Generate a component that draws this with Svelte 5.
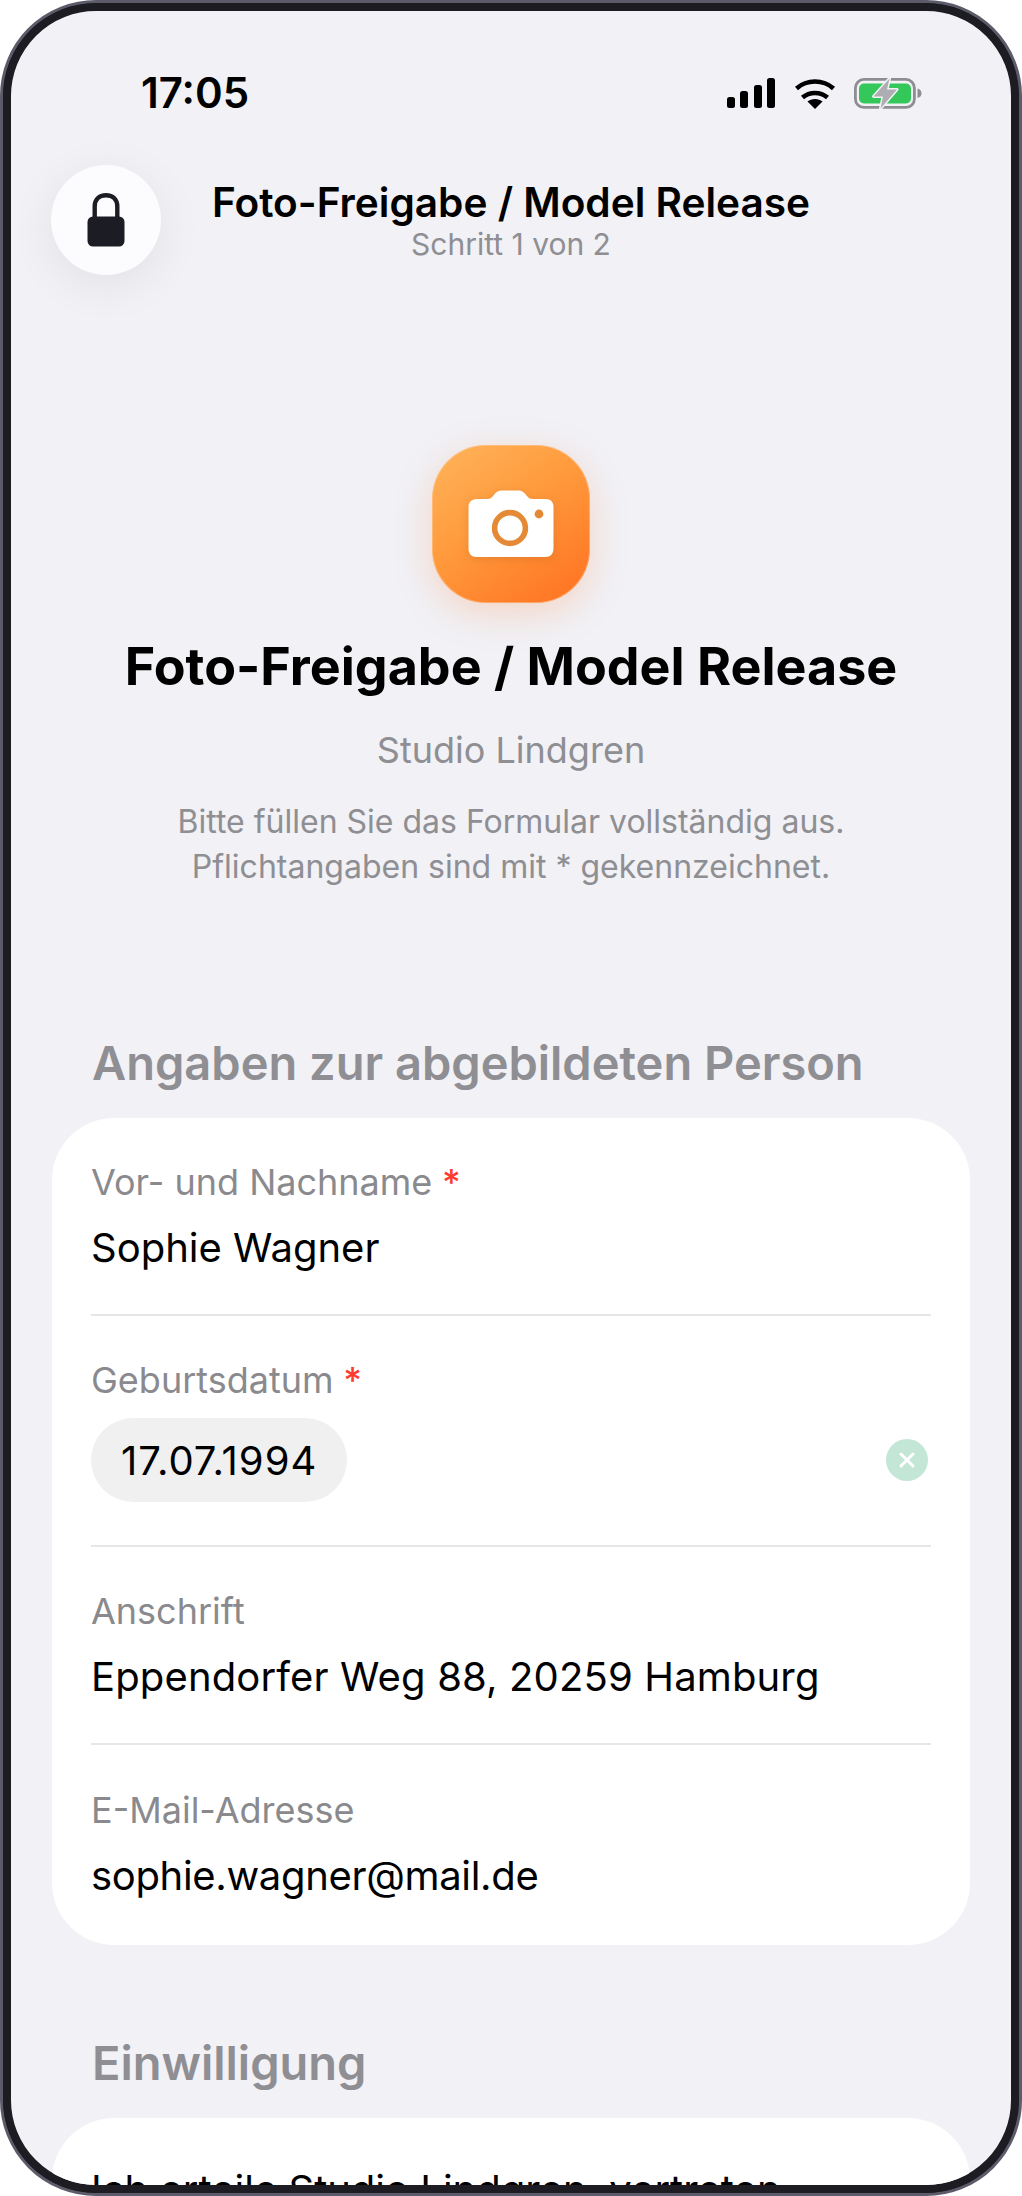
<script>
  const rows = [
    { label: 'Vor- und Nachname', value: 'Sophie Wagner', req: true },
    { label: 'Geburtsdatum', value: '17.07.1994', req: true, pill: true },
    { label: 'Anschrift', value: 'Eppendorfer Weg 88, 20259 Hamburg', kind: 'address' },
    { label: 'E-Mail-Adresse', value: 'sophie.wagner@mail.de', kind: 'email' }
  ];
</script>

<div class="device">
  <div class="screen">
    <div class="status">
      <span class="time">17:05</span>
      <div class="indicators">
        <svg class="signal" width="49" height="31" viewBox="0 0 49 31" aria-hidden="true">
          <rect x="0" y="19" width="8" height="11" rx="2.5" />
          <rect x="13" y="13" width="8" height="17" rx="2.5" />
          <rect x="27" y="7" width="8" height="23" rx="2.5" />
          <rect x="40" y="0" width="8" height="30" rx="2.5" />
        </svg>
        <svg class="wifi" width="42" height="31" viewBox="0 0 42 31" aria-hidden="true">
          <path d="M21 31 L13.5 23.6 C17.6 20 24.4 20 28.5 23.6 Z" />
          <path d="M8.5 19.5 C15.5 13.4 26.5 13.4 33.5 19.5" fill="none" stroke="#000" stroke-width="4.6" />
          <path d="M2.5 10.5 C13 1.2 29 1.2 39.5 10.5" fill="none" stroke="#000" stroke-width="4.6" />
        </svg>
        <svg class="battery" width="70" height="33" viewBox="0 0 70 33" aria-hidden="true">
          <rect x="1.4" y="2.4" width="59" height="28" rx="8.5" fill="none" stroke="#8e8e92" stroke-width="2.8" />
          <rect x="5" y="6.5" width="52" height="20" rx="5" fill="#34c759" />
          <path d="M63.5 11.5 C66.5 12.5 67.5 14 67.5 16.3 C67.5 18.6 66.5 20.2 63.5 21 Z" fill="#8e8e92" />
          <path d="M35.5 1.5 L19.5 19.5 H29 L26.5 31.5 L43 12.5 H33 Z" fill="#aeaeb2" stroke="#f1f1f6" stroke-width="3" paint-order="stroke" stroke-linejoin="round" />
        </svg>
      </div>
    </div>

    <header class="nav">
      <div class="lock">
        <svg width="38" height="54" viewBox="0 0 38 54" aria-hidden="true">
          <path d="M7.7 26 V13.5 C7.7 6.5 12 2.2 19 2.2 C26 2.2 30.3 6.5 30.3 13.5 V26" fill="none" stroke="#1c1c24" stroke-width="4.4" />
          <rect x="0.5" y="23.5" width="37" height="30" rx="5.5" fill="#1c1c24" />
        </svg>
      </div>
      <div class="nav-text">
        <div class="nav-title">Foto-Freigabe / Model Release</div>
        <div class="nav-sub">Schritt 1 von 2</div>
      </div>
    </header>

    <section class="hero">
      <div class="app-icon">
        <svg class="camera" width="86" height="68" viewBox="0 0 86 68" aria-hidden="true">
          <path d="M9 9 H19 C22 9 23.5 8 25.5 5.5 C28 2 30 0.5 34 0.5 H50 C54 0.5 56 2 58.5 5.5 C60.5 8 62 9 65 9 H78 C82.5 9 85.5 12 85.5 16.5 V58.5 C85.5 63.5 82.5 67 77.5 67 H8.5 C3.5 67 0.5 63.5 0.5 58.5 V16.5 C0.5 12 4 9 9 9 Z" fill="#fff" />
          <circle cx="42" cy="38" r="15.4" fill="none" stroke="#e48a36" stroke-width="5.6" />
          <circle cx="71" cy="24" r="4.4" fill="#e48a36" />
        </svg>
      </div>
      <h1>Foto-Freigabe / Model Release</h1>
      <p class="studio">Studio Lindgren</p>
      <p class="desc">Bitte füllen Sie das Formular vollständig aus.<br />Pflichtangaben sind mit * gekennzeichnet.</p>
    </section>

    <h2 class="first">Angaben zur abgebildeten Person</h2>
    <div class="card">
      {#each rows as row}
        <div class="row" class:has-pill={row.pill}>
          <div class="label">{row.label}{#if row.req}<span class="req">&nbsp;*</span>{/if}</div>
          {#if row.pill}
            <div class="pill-line">
              <span class="pill">{row.value}</span>
              <span class="clear">
                <svg width="18" height="18" viewBox="0 0 18 18" aria-hidden="true">
                  <path d="M3 3 L15 15 M15 3 L3 15" stroke="#fff" stroke-width="3" stroke-linecap="round" />
                </svg>
              </span>
            </div>
          {:else}
            <div class="value {row.kind ?? ''}">{row.value}</div>
          {/if}
        </div>
      {/each}
    </div>

    <h2 class="second">Einwilligung</h2>
    <div class="card consent">
      <p>Ich erteile Studio Lindgren, vertreten</p>
    </div>
  </div>
</div>

<style>
  :global(body) { margin: 0; background: #fff; }
  .device {
    width: 1022px; height: 2196px; box-sizing: border-box;
    border: 3px solid #5b5b69; border-radius: 96px; background: #1c1c22;
    font-family: Inter, "Liberation Sans", sans-serif; overflow: hidden;
  }
  .screen {
    height: 100%; box-sizing: border-box;
    border: 8px solid #1c1c22; border-radius: 93px; overflow: hidden; background: #f1f1f6;
    display: flex; flex-direction: column;
  }
  .status {
    flex: none; height: 70px; margin-top: 47px; padding: 0 87px 0 130px;
    display: flex; justify-content: space-between; align-items: center;
  }
  .time { font-size: 42px; font-weight: 600; color: #000; line-height: 48px; }
  .indicators { display: flex; align-items: center; gap: 18px; }
  .nav { flex: none; position: relative; height: 110px; margin-top: 37px; display: flex; justify-content: center; }
  .lock {
    position: absolute; left: 40px; top: 0; width: 110px; height: 110px; border-radius: 50%;
    background: #fcfcfe; box-shadow: 0 10px 48px rgba(0,0,0,.07);
    display: flex; align-items: center; justify-content: center;
  }
  .nav-text { text-align: center; padding-top: 14px; }
  .nav-title { font-size: 40.6px; font-weight: 600; line-height: 48px; color: #000; }
  .nav-sub { font-size: 30px; line-height: 34px; color: #8e8e93; }
  .hero { flex: none; display: flex; flex-direction: column; align-items: center; margin-top: 170px; }
  .app-icon {
    width: 158px; height: 158px; border-radius: 54px;
    background: linear-gradient(145deg, #ffb45c 0%, #ff9a3c 45%, #ff6f1f 100%);
    box-shadow: 0 10px 36px rgba(255,130,50,.25), inset 0 0 0 1px rgba(255,210,170,.45);
    display: flex; align-items: center; justify-content: center;
  }
  .camera { filter: drop-shadow(0 2px 4px rgba(160,80,20,.25)); }
  h1 { margin: 34px 0 0; font-size: 52px; line-height: 60px; font-weight: 700; color: #000; }
  .studio { margin: 32px 0 0; font-size: 36px; line-height: 42px; color: #8e8e93; }
  .desc { margin: 28px 0 0; font-size: 32px; line-height: 45px; color: #8e8e93; text-align: center; }
  h2 { flex: none; margin: 0; padding-left: 81px; font-size: 47px; line-height: 54px; font-weight: 600; color: #8e8e93; }
  h2.first { margin-top: 147px; }
  h2.second { margin-top: 91px; }
  .card { flex: none; margin: 28px 41px 0; background: #fff; border-radius: 62px; padding: 0 39px; }
  .row { padding-top: 43px; padding-bottom: 43px; border-bottom: 2px solid #e6e6e8; }
  .row:last-child { border-bottom: 0; padding-top: 44px; padding-bottom: 46px; }
  .label { font-size: 36px; line-height: 42px; color: #8a8a8e; }
  .req { color: #ff3b30; font-weight: 500; }
  .value { margin-top: 21px; font-size: 40px; line-height: 47px; color: #000; }
  .value.address { letter-spacing: 0.14px; }
  .value.email { letter-spacing: -0.33px; }
  .pill-line { display: flex; align-items: center; justify-content: space-between; margin-top: 17px; }
  .pill { background: #f0f0f0; border-radius: 42px; height: 84px; padding: 0 30px; display: flex; align-items: center; font-size: 40px; letter-spacing: 1px; color: #000; }
  .clear { width: 42px; height: 42px; border-radius: 50%; background: #c3e6d6; display: flex; align-items: center; justify-content: center; margin-right: 3px; }
  .consent { padding-top: 46px; padding-bottom: 80px; }
  .consent p { margin: 0; font-size: 40px; line-height: 52px; color: #000; white-space: nowrap; }
</style>
